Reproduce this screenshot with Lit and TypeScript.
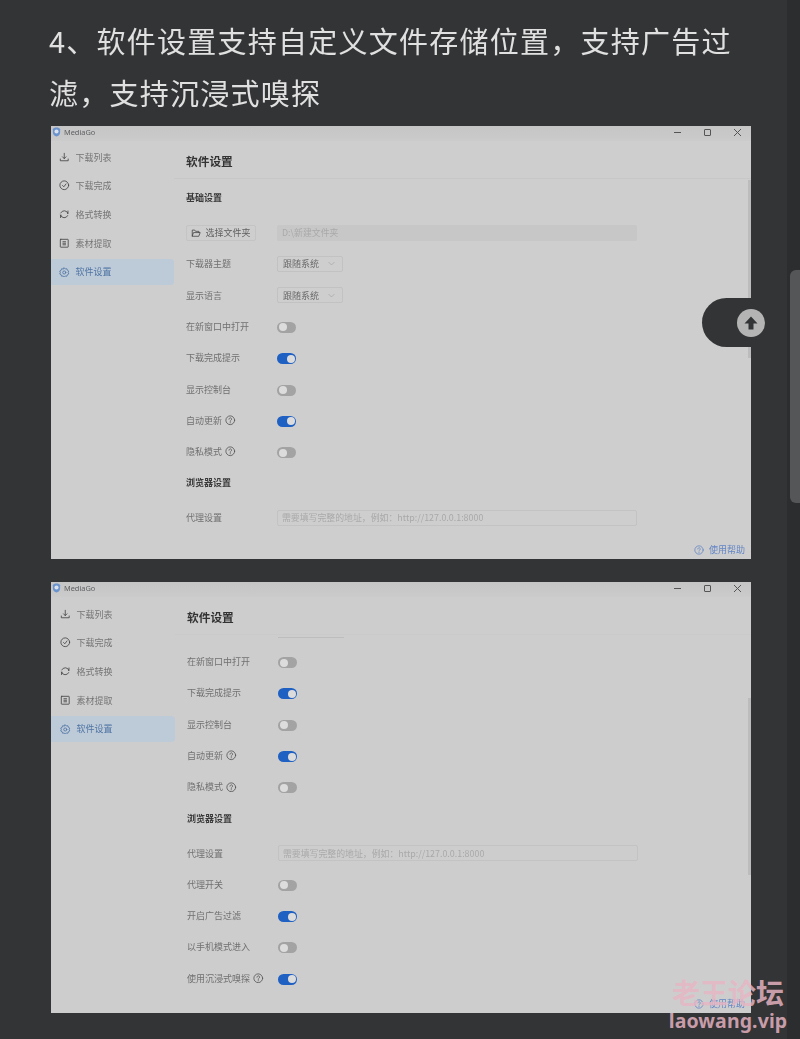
import { LitElement, html, css, svg } from "lit";
import { customElement, property } from "lit/decorators.js";

const ico = (body: unknown, size = 10) => html`<svg class="ico" width=${size} height=${size} viewBox="0 0 24 24" fill="none" stroke="currentColor" stroke-width="1.9" stroke-linecap="round" stroke-linejoin="round">${body}</svg>`;

const icons = {
  download: svg`<path d="M12 3v12M8 11l4 4 4-4M3 16v4h18v-4"/>`,
  check: svg`<circle cx="12" cy="12" r="10"/><path d="M8 12.5l3 3 5-6.5"/>`,
  convert: svg`<path d="M4 9a9 9 0 0 1 16.5 1M20 15a9 9 0 0 1-16.5-1"/><path d="M20.5 4.5v5.5h-1M3.5 19.5v-5.5h1"/>`,
  material: svg`<rect x="3" y="3" width="18" height="18" rx="1"/><path d="M9 8.5h6M9 12h6M9 15.5h6"/>`,
  gear: svg`<path d="M12 2l2.5 2.6 3.6-.6 1 3.5 3.2 1.8L21 12.6l1.3 3.3-3.2 1.8-1 3.4-3.6-.6L12 23l-2.5-2.5-3.6.6-1-3.4-3.2-1.8L3 12.6 1.700 9.300l3.200-1.800 1-3.500 3.600.6z"/><circle cx="12" cy="12.500" r="3.500"/>`,
  help: svg`<circle cx="12" cy="12" r="10"/><path d="M9 9.500a3 3 0 1 1 4.500 2.600c-1 .6-1.500 1.200-1.500 2.400"/><path d="M12 17.500v.5"/>`,
  folder: svg`<path d="M3 19V5h6l2 3h8v3M3 19l3-8h16l-3 8z"/>`,
  chevron: svg`<path d="M5 9l7 7 7-7"/>`,
};

type Row =
  | { k: "head"; t: string; gap?: boolean }
  | { k: "folder" }
  | { k: "select"; t: string }
  | { k: "toggle"; t: string; on?: boolean; help?: boolean }
  | { k: "proxy" };

const NAV: [string, keyof typeof icons][] = [
  ["下载列表", "download"],
  ["下载完成", "check"],
  ["格式转换", "convert"],
  ["素材提取", "material"],
  ["软件设置", "gear"],
];

const ROWS_A: Row[] = [
  { k: "head", t: "基础设置" },
  { k: "folder" },
  { k: "select", t: "下载器主题" },
  { k: "select", t: "显示语言" },
  { k: "toggle", t: "在新窗口中打开" },
  { k: "toggle", t: "下载完成提示", on: true },
  { k: "toggle", t: "显示控制台" },
  { k: "toggle", t: "自动更新", on: true, help: true },
  { k: "toggle", t: "隐私模式", help: true },
  { k: "head", t: "浏览器设置" },
  { k: "proxy" },
];

const ROWS_B: Row[] = [
  { k: "toggle", t: "在新窗口中打开" },
  { k: "toggle", t: "下载完成提示", on: true },
  { k: "toggle", t: "显示控制台" },
  { k: "toggle", t: "自动更新", on: true, help: true },
  { k: "toggle", t: "隐私模式", help: true },
  { k: "head", t: "浏览器设置" },
  { k: "proxy" },
  { k: "toggle", t: "代理开关" },
  { k: "toggle", t: "开启广告过滤", on: true },
  { k: "toggle", t: "以手机模式进入" },
  { k: "toggle", t: "使用沉浸式嗅探", on: true, help: true },
];

@customElement("media-window")
class MediaWindow extends LitElement {
  @property({ type: Boolean, reflect: true }) scrolled = false;
  @property({ attribute: false }) rows: Row[] = [];

  static styles = css`
    :host {
      display: block;
      position: relative;
      width: 700px;
      background: #cecece;
      font-family: "Noto Sans CJK SC", "Noto Sans", sans-serif;
      font-size: 9px;
      color: #707070;
      overflow: hidden;
      filter: blur(0.35px);
    }
    :host([scrolled]) { background: #cdcdce; }
    .ico { display: block; flex: none; }
    .title {
      height: 15px;
      box-sizing: border-box;
      padding: 0 0 3px 1px;
      background: linear-gradient(#c5c5c5, #cbcbcb);
      display: flex;
      align-items: center;
      gap: 3px;
      color: #5f6063;
      font-size: 7.4px;
      font-family: "Noto Sans", sans-serif;
    }
    .title .name { flex: 1; }
    .ctls { display: flex; margin-right: -1px; }
    .ctl { width: 30px; display: flex; justify-content: center; color: #555; }
    .main { display: flex; height: 100%; }
    .side {
      width: 123px;
      flex: none;
      padding-top: 3px;
      display: flex;
      flex-direction: column;
      gap: 2.7px;
    }
    .nav {
      height: 26px;
      display: flex;
      align-items: center;
      gap: 6px;
      padding-left: 8px;
      border-radius: 0 4px 4px 0;
      color: #757575;
    }
    .nav .ico { color: #444; }
    .nav.active { background: #bdcad8; color: #4f74a3; }
    .nav.active .ico { color: #4f74a3; }
    :host([scrolled]) .nav { padding-left: 9px; }
    :host([scrolled]) .side { width: 124px; padding-top: 4px; }
    .content { flex: 1; min-width: 0; }
    .head {
      height: 38px;
      display: flex;
      align-items: center;
      padding: 2px 0 0 12px;
      box-sizing: border-box;
      font-size: 11.7px;
      font-weight: 700;
      color: #333;
      border-bottom: 1px solid #c7c7c7;
    }
    :host([scrolled]) .head { border-bottom-color: #cacaca; }
    .body { padding: 3px 0 0 12px; }
    :host([scrolled]) .body { padding: 2px 0 0 12px; }
    .stub {
      width: 66px;
      height: 1px;
      background: #bdbdbd;
      margin: 0 0 8px 91px;
    }
    .row {
      height: 31.3px;
      display: flex;
      align-items: center;
    }
    .label { width: 91px; flex: none; display: flex; align-items: center; gap: 3px; }
    .label .ico { color: #555; }
    .sec { font-weight: 700; color: #3a3a3a; }
    .sec + .row { margin-top: 3.6px; }
    .btn {
      width: 70px;
      height: 16px;
      flex: none;
      margin-right: 21px;
      box-sizing: border-box;
      display: flex;
      align-items: center;
      justify-content: center;
      gap: 4px;
      border: 1px solid #c4c4c4;
      border-radius: 2px;
      color: #606060;
    }
    .btn .ico { color: #444; }
    .field {
      width: 360px;
      height: 16px;
      box-sizing: border-box;
      border: 1px solid #c3c3c3;
      border-radius: 2px;
      padding-left: 4px;
      display: flex;
      align-items: center;
      font-size: 8.9px;
      color: #a9a9a9;
    }
    .field.off { background: #c7c7c7; border-color: #c7c7c7; }
    .select {
      width: 66px;
      height: 16px;
      box-sizing: border-box;
      border: 1px solid #c2c2c2;
      border-radius: 2px;
      padding: 0 6px 0 5px;
      display: flex;
      align-items: center;
      justify-content: space-between;
      color: #6a6a6a;
    }
    .select .ico { color: #a5a5a5; }
    .switch {
      width: 19px;
      height: 11px;
      margin-top: 2px;
      border-radius: 6px;
      background: #a3a3a3;
      display: flex;
      align-items: center;
      padding: 0 1.5px;
      box-sizing: border-box;
    }
    .switch i { width: 8px; height: 8px; border-radius: 50%; background: #dcdcdc; }
    .switch.on { background: #1f60c3; justify-content: flex-end; }
    .scroll {
      position: absolute;
      right: 0;
      width: 3px;
      background: #bcbcbc;
    }
    .help {
      position: absolute;
      right: 6px;
      bottom: 3px;
      display: flex;
      align-items: center;
      gap: 5px;
      color: #6385c4;
    }
  `;

  private renderRow(r: Row) {
    switch (r.k) {
      case "head":
        return html`<div class="row sec">${r.t}</div>`;
      case "folder":
        return html`<div class="row">
          <div class="btn">${ico(icons.folder, 10)}选择文件夹</div>
          <div class="field off">D:\\新建文件夹</div>
        </div>`;
      case "select":
        return html`<div class="row">
          <div class="label">${r.t}</div>
          <div class="select">跟随系统${ico(icons.chevron, 9)}</div>
        </div>`;
      case "proxy":
        return html`<div class="row">
          <div class="label">代理设置</div>
          <div class="field">需要填写完整的地址，例如：http://127.0.0.1:8000</div>
        </div>`;
      case "toggle":
        return html`<div class="row">
          <div class="label">${r.t}${r.help ? ico(icons.help, 10.5) : ""}</div>
          <div class="switch ${r.on ? "on" : ""}"><i></i></div>
        </div>`;
    }
  }

  render() {
    return html`
      <div class="title">
        <svg width="9" height="10" viewBox="0 0 20 22">
          <path d="M10 1c3 0 8 1 8 4v7c0 5-4 8-8 9-4-1-8-4-8-9V5c0-3 5-4 8-4z" fill="#6b94cf" />
          <circle cx="10" cy="10" r="4.500" fill="#dbe2ea" />
        </svg>
        <span class="name">MediaGo</span>
        <span class="ctls">
          <span class="ctl"><svg width="9" height="9" viewBox="0 0 9 9" stroke="currentColor" fill="none"><path d="M1 4.500h7" /></svg></span>
          <span class="ctl"><svg width="9" height="9" viewBox="0 0 9 9" stroke="currentColor" fill="none"><rect x="1.500" y="1.500" width="6" height="6" rx="0.500" /></svg></span>
          <span class="ctl"><svg width="9" height="9" viewBox="0 0 9 9" stroke="currentColor" fill="none"><path d="M1 1l7 7M8 1L1 8" /></svg></span>
        </span>
      </div>
      <div class="main">
        <div class="side">
          ${NAV.map(([t, i]) => html`<div class="nav ${t === "软件设置" ? "active" : ""}">${ico(icons[i], 10.500)}<span>${t}</span></div>`)}
        </div>
        <div class="content">
          <div class="head">软件设置</div>
          <div class="body">
            ${this.scrolled ? html`<div class="stub"></div>` : ""}
            ${this.rows.map((r) => this.renderRow(r))}
          </div>
        </div>
      </div>
      <div class="scroll" style="top:${this.scrolled ? 116 : 54}px;height:${this.scrolled ? 177 : 178}px"></div>
      <div class="help">${ico(icons.help, 10)}<span>使用帮助</span></div>
    `;
  }
}

@customElement("app-root")
export class AppRoot extends LitElement {
  static styles = css`
    :host {
      display: block;
      position: relative;
      width: 800px;
      height: 1039px;
      overflow: hidden;
      background: #333436;
      font-family: "Noto Sans CJK SC", "Noto Sans", sans-serif;
    }
    .page {
      display: flex;
      flex-direction: column;
      align-items: flex-start;
      padding: 14px 49px 0;
    }
    h1 {
      margin: 0 0 8px;
      font-size: 29px;
      font-weight: 400;
      letter-spacing: 1.25px;
      line-height: 52px;
      color: #e0e0e0;
      filter: blur(0.3px);
    }
    media-window { margin-left: 2px; }
    .w1 { height: 433px; margin-bottom: 23px; }
    .w2 { height: 431px; }
    .gutter {
      position: absolute;
      top: 0;
      right: 0;
      bottom: 0;
      width: 13px;
      background: #2c2d2f;
    }
    .thumb {
      position: absolute;
      top: 270px;
      right: 0;
      width: 10px;
      height: 233px;
      border-radius: 6px 0 0 6px;
      background: #555658;
    }
    .pill {
      position: absolute;
      left: 702px;
      top: 298px;
      width: 49px;
      height: 49px;
      border-radius: 25px 0 0 25px;
      background: #333436;
    }
    .up {
      position: absolute;
      left: 737px;
      top: 309px;
      width: 28px;
      height: 28px;
      border-radius: 50%;
      background: #b4b4b4;
      display: flex;
      align-items: center;
      justify-content: center;
    }
    .mark {
      position: absolute;
      left: 668px;
      width: 120px;
      top: 975px;
      display: flex;
      flex-direction: column;
      align-items: center;
      color: rgba(232, 182, 196, 0.82);
      font-weight: 700;
      white-space: nowrap;
    }
    .mark .zh { font-size: 28px; line-height: 35px; }
    .mark .en { font-family: "Noto Sans", sans-serif; font-size: 19.500px; line-height: 22px; letter-spacing: 0.1px; }
  `;

  render() {
    return html`
      <div class="page">
        <h1>4、软件设置支持自定义文件存储位置，支持广告过滤，支持沉浸式嗅探</h1>
        <media-window class="w1" .rows=${ROWS_A}></media-window>
        <media-window class="w2" scrolled .rows=${ROWS_B}></media-window>
      </div>
      <div class="gutter"></div>
      <div class="thumb"></div>
      <div class="pill"></div>
      <div class="up">
        <svg width="16" height="16" viewBox="0 0 16 16"><path d="M8 1.500L14.500 8.500H10.500V14.500H5.500V8.500H1.500Z" fill="#333436" /></svg>
      </div>
      <div class="mark"><span class="zh">老王论坛</span><span class="en">laowang.vip</span></div>
    `;
  }
}
